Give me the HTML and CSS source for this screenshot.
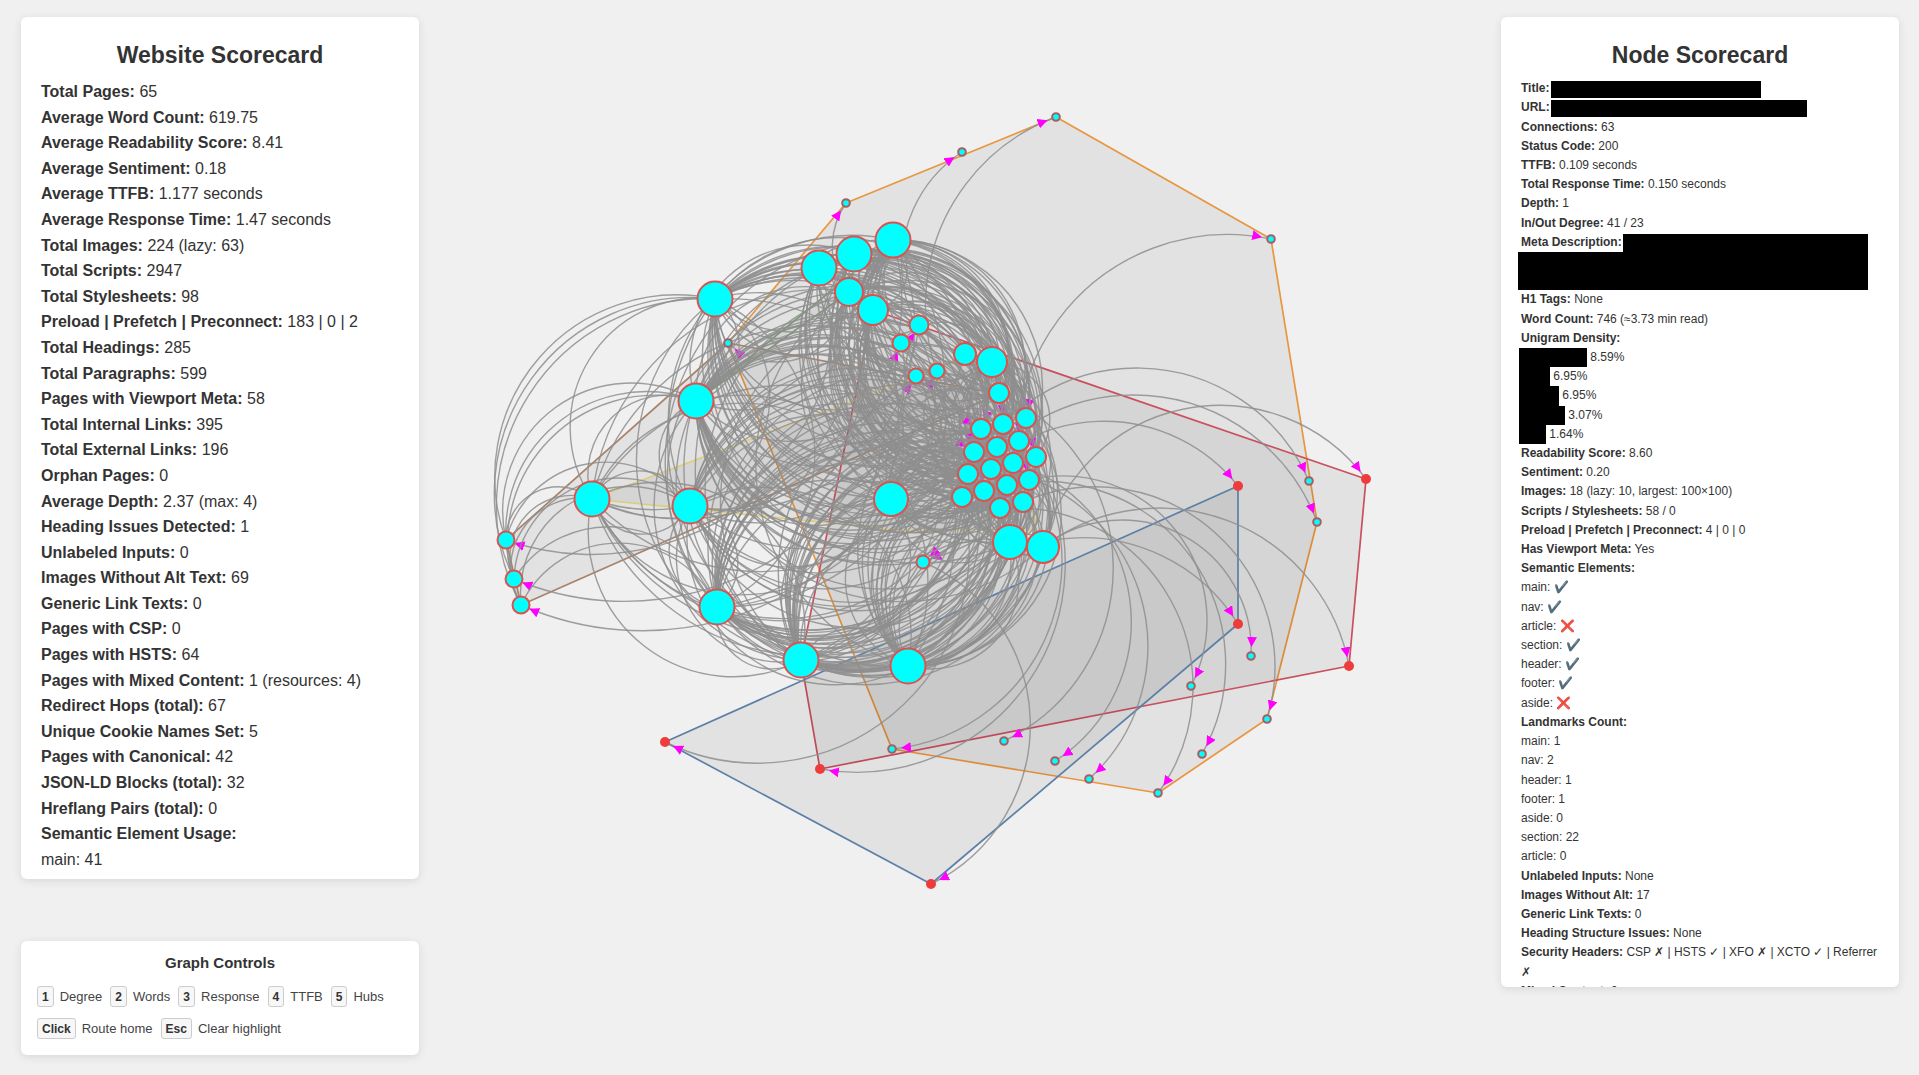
FILE: index.html
```html
<!DOCTYPE html>
<html lang="en">
<head>
<meta charset="utf-8">
<title>Website Graph</title>
<link rel="stylesheet" href="styles.css">
</head>
<body>
<svg id="graph" class="graph" viewBox="0 0 1919 1075" xmlns="http://www.w3.org/2000/svg">
  <defs>
    <marker id="arrow" viewBox="0 -5 10 10" refX="19" refY="0" markerUnits="userSpaceOnUse" markerWidth="10" markerHeight="10" orient="auto">
      <path d="M0,-5L10,0L0,5Z" class="arrowhead"/>
    </marker>
  </defs>
</svg>
<div class="layout">
  <aside class="column">
    <section class="panel site-panel">
      <h2 class="panel-title">Website Scorecard</h2>
      <div class="row"><b>Total Pages:</b> 65</div>
      <div class="row"><b>Average Word Count:</b> 619.75</div>
      <div class="row"><b>Average Readability Score:</b> 8.41</div>
      <div class="row"><b>Average Sentiment:</b> 0.18</div>
      <div class="row"><b>Average TTFB:</b> 1.177 seconds</div>
      <div class="row"><b>Average Response Time:</b> 1.47 seconds</div>
      <div class="row"><b>Total Images:</b> 224 (lazy: 63)</div>
      <div class="row"><b>Total Scripts:</b> 2947</div>
      <div class="row"><b>Total Stylesheets:</b> 98</div>
      <div class="row"><b>Preload | Prefetch | Preconnect:</b> 183 | 0 | 2</div>
      <div class="row"><b>Total Headings:</b> 285</div>
      <div class="row"><b>Total Paragraphs:</b> 599</div>
      <div class="row"><b>Pages with Viewport Meta:</b> 58</div>
      <div class="row"><b>Total Internal Links:</b> 395</div>
      <div class="row"><b>Total External Links:</b> 196</div>
      <div class="row"><b>Orphan Pages:</b> 0</div>
      <div class="row"><b>Average Depth:</b> 2.37 (max: 4)</div>
      <div class="row"><b>Heading Issues Detected:</b> 1</div>
      <div class="row"><b>Unlabeled Inputs:</b> 0</div>
      <div class="row"><b>Images Without Alt Text:</b> 69</div>
      <div class="row"><b>Generic Link Texts:</b> 0</div>
      <div class="row"><b>Pages with CSP:</b> 0</div>
      <div class="row"><b>Pages with HSTS:</b> 64</div>
      <div class="row"><b>Pages with Mixed Content:</b> 1 (resources: 4)</div>
      <div class="row"><b>Redirect Hops (total):</b> 67</div>
      <div class="row"><b>Unique Cookie Names Set:</b> 5</div>
      <div class="row"><b>Pages with Canonical:</b> 42</div>
      <div class="row"><b>JSON-LD Blocks (total):</b> 32</div>
      <div class="row"><b>Hreflang Pairs (total):</b> 0</div>
      <div class="row"><b>Semantic Element Usage:</b></div>
      <div class="row">main: 41</div>
    </section>
    <section class="panel controls-panel">
      <h3 class="controls-title">Graph Controls</h3>
      <div class="controls-row">
        <span class="control"><kbd class="key">1</kbd>Degree</span>
        <span class="control"><kbd class="key">2</kbd>Words</span>
        <span class="control"><kbd class="key">3</kbd>Response</span>
        <span class="control"><kbd class="key">4</kbd>TTFB</span>
        <span class="control"><kbd class="key">5</kbd>Hubs</span>
      </div>
      <div class="controls-row">
        <span class="control"><kbd class="key">Click</kbd>Route home</span>
        <span class="control"><kbd class="key">Esc</kbd>Clear highlight</span>
      </div>
    </section>
  </aside>
  <aside class="column">
    <section class="panel node-panel">
      <h2 class="panel-title">Node Scorecard</h2>
      <div class="row"><b>Title:</b> <span class="redact redact-line redact-title"></span></div>
      <div class="row"><b>URL:</b> <span class="redact redact-line redact-url"></span></div>
      <div class="row"><b>Connections:</b> 63</div>
      <div class="row"><b>Status Code:</b> 200</div>
      <div class="row"><b>TTFB:</b> 0.109 seconds</div>
      <div class="row"><b>Total Response Time:</b> 0.150 seconds</div>
      <div class="row"><b>Depth:</b> 1</div>
      <div class="row"><b>In/Out Degree:</b> 41 / 23</div>
      <div class="row"><b>Meta Description:</b> <span class="redact redact-line redact-meta"></span></div>
      <div class="redact redact-meta-block"></div>
      <div class="row"><b>H1 Tags:</b> None</div>
      <div class="row"><b>Word Count:</b> 746 (≈3.73 min read)</div>
      <div class="row"><b>Unigram Density:</b></div>
      <div class="row bar-row"><span class="redact bar bar-a"></span> 8.59%</div>
      <div class="row bar-row"><span class="redact bar bar-b"></span> 6.95%</div>
      <div class="row bar-row"><span class="redact bar bar-c"></span> 6.95%</div>
      <div class="row bar-row"><span class="redact bar bar-d"></span> 3.07%</div>
      <div class="row bar-row"><span class="redact bar bar-e"></span> 1.64%</div>
      <div class="row"><b>Readability Score:</b> 8.60</div>
      <div class="row"><b>Sentiment:</b> 0.20</div>
      <div class="row"><b>Images:</b> 18 (lazy: 10, largest: 100×100)</div>
      <div class="row"><b>Scripts / Stylesheets:</b> 58 / 0</div>
      <div class="row"><b>Preload | Prefetch | Preconnect:</b> 4 | 0 | 0</div>
      <div class="row"><b>Has Viewport Meta:</b> Yes</div>
      <div class="row"><b>Semantic Elements:</b></div>
      <div class="row">main: ✔️</div>
      <div class="row">nav: ✔️</div>
      <div class="row">article: ❌</div>
      <div class="row">section: ✔️</div>
      <div class="row">header: ✔️</div>
      <div class="row">footer: ✔️</div>
      <div class="row">aside: ❌</div>
      <div class="row"><b>Landmarks Count:</b></div>
      <div class="row">main: 1</div>
      <div class="row">nav: 2</div>
      <div class="row">header: 1</div>
      <div class="row">footer: 1</div>
      <div class="row">aside: 0</div>
      <div class="row">section: 22</div>
      <div class="row">article: 0</div>
      <div class="row"><b>Unlabeled Inputs:</b> None</div>
      <div class="row"><b>Images Without Alt:</b> 17</div>
      <div class="row"><b>Generic Link Texts:</b> 0</div>
      <div class="row"><b>Heading Structure Issues:</b> None</div>
      <div class="row"><b>Security Headers:</b> CSP ✗ | HSTS ✓ | XFO ✗ | XCTO ✓ | Referrer ✗</div>
      <div class="row"><b>Mixed Content:</b> 0</div>
    </section>
  </aside>
</div>
<script src="graph.js"></script>
</body>
</html>
```
FILE: styles.css
```css
* { box-sizing: border-box; }
html, body { height: 100%; margin: 0; overflow: hidden; }
body {
  position: relative;
  background: #f0f0f0;
  color: #333;
  font-family: "Liberation Sans", Arial, sans-serif;
}
.graph { position: absolute; inset: 0; width: 100%; height: 100%; }
.layout {
  position: relative;
  display: flex;
  justify-content: space-between;
  height: 100%;
  padding: 17px 20px 20px 21px;
  pointer-events: none;
}
.column { display: flex; flex-direction: column; width: 398px; }
.panel {
  background: #fff;
  border-radius: 6px;
  box-shadow: 0 2px 10px rgba(0, 0, 0, 0.1);
  overflow: hidden;
}
.site-panel { height: 862px; padding: 20px 20px 0; font-size: 16px; line-height: 25.6px; }
.site-panel .panel-title { margin-bottom: 4.6px; }
.node-panel { height: 970px; padding: 20px 20px 0; font-size: 12px; line-height: 19.2px; }
.panel-title { margin: 0 0 4.8px; font-size: 23px; line-height: 37.4px; text-align: center; color: #333; }
.row b { font-weight: 700; }
.redact { background: #000; }
.redact-line { display: inline-block; height: 17px; margin: 2px 0 0 -2px; vertical-align: top; }
.redact-title { width: 210px; }
.redact-url { width: 256px; }
.redact-meta { width: 245px; height: 18px; margin-top: 1px; }
.redact-meta-block { width: 350px; height: 38.4px; margin-left: -3px; }
.bar { display: inline-block; height: 19.2px; vertical-align: top; margin-left: -2px; }
.bar-a { width: 68px; }
.bar-b { width: 31px; }
.bar-c { width: 40px; }
.bar-d { width: 46px; }
.bar-e { width: 27px; }
.controls-panel { margin-top: auto; height: 114px; padding: 13px 16px 0; }
.controls-title { margin: 0 0 15px; font-size: 15px; line-height: 17px; text-align: center; color: #333; }
.controls-row { display: flex; gap: 8px; height: 21px; margin-bottom: 11px; }
.control { display: flex; align-items: center; font-size: 13px; line-height: 22px; color: #444; white-space: nowrap; }
.key {
  display: flex;
  align-items: center;
  height: 21px;
  margin-right: 6px;
  padding: 0 4px;
  border: 1px solid #ccc;
  border-radius: 3px;
  background: #f7f7f7;
  font: 700 12px "Liberation Sans", Arial, sans-serif;
  color: #333;
}
.hull { stroke-width: 1.7; fill: rgba(0, 0, 0, 0.055); stroke-linejoin: round; }
.hull-orange { stroke: #e8963f; }
.hull-red { stroke: #c9505e; }
.hull-blue { stroke: #5b7fa6; }
.hull-brown { stroke: #a8836a; }
.hull-yellow { stroke: #ddcd7a; }
.hull-green { stroke: #7a9a72; }
.edge { fill: none; stroke: #8e8e8e; stroke-opacity: 0.85; stroke-width: 1.4; }
.edge-arrow { marker-end: url(#arrow); }
.arrowhead { fill: #f0f; }
.node-big { fill: #0ff; stroke: #d9534f; stroke-width: 2; }
.node-small { fill: #0ff; stroke: #a85d60; stroke-width: 2; }
.node-red { fill: #ee3b3b; }
```
FILE: graph.js
```js
(function () {
  var NS = 'http://www.w3.org/2000/svg';
  var svg = document.getElementById('graph');
  var RATIO = 0.55;

  var hubs = [[715,299,17.5],[819,268,17.5],[854,254,17.5],[893,240,17.5],[849,292,14],[873,310,15],
    [696,401,17.5],[592,499,17.5],[690,506,17.5],[891,499,17],[717,607,17.5],[801,660,17.5],
    [908,666,17.5],[1010,542,17],[1043,547,16],[992,362,15]];
  var leftHubs = { 0: 1, 1: 1, 2: 1, 6: 1, 8: 1, 10: 1 };
  var heavyHubs = { 0: 1, 3: 1, 6: 1, 10: 1, 11: 1 };
  var cluster = [[1026,418],[1003,424],[981,429],[1019,441],[997,447],[974,452],[1036,457],[1013,463],
    [991,469],[968,474],[1029,480],[1007,485],[984,491],[962,497],[1023,502],[1000,508],[999,393]];
  var mid = [[965,354,11],[919,325,9.5],[901,343,8.5],[916,376,7.5],[937,371,7.5],[923,562,6.5],
    [506,540,8.5],[514,579,8.5],[521,605,8.5]];
  var small = [[728,343],[846,203],[962,152],[1056,117],[1271,239],[1309,481],[1317,522],[1251,656],
    [1191,686],[1267,719],[1202,754],[1158,793],[1089,779],[1055,761],[1004,741],[892,749]];
  var reds = [[665,742],[820,769],[931,884],[1238,486],[1238,624],[1366,479],[1349,666]];

  var hulls = [
    ['orange', [[846,203],[728,343],[892,749],[1158,793],[1267,719],[1317,522],[1271,239],[1056,117]]],
    ['red', [[873,310],[1366,479],[1349,666],[820,769],[801,660]]],
    ['blue', [[665,742],[1238,486],[1238,624],[931,884]]],
    ['brown', [[506,540],[728,343],[999,394],[521,605]]],
    ['yellow', [[592,499],[966,358],[992,363],[1036,520],[1035,530],[900,530]]],
    ['green', [[696,401],[853,273],[849,292]]]
  ];

  // Incoming links of the small inner nodes, drawn first so the hairball covers them.
  var under = [
    [1013,463,919,325],[997,447,901,343],[1000,508,916,376],[1023,502,937,371],[981,429,937,371],
    [849,292,728,343],[937,371,923,562],[849,292,923,562]
  ];
  // Links that can be told apart around the outside of the hairball; a fifth value is a set radius.
  var outer = [
    [1029,480,1056,117],[999,393,962,152],[919,325,846,203],[1043,547,1271,239],[968,474,1309,481],
    [1043,547,1366,479],[962,497,1238,486,171],[962,497,1317,522],[1043,547,1251,656],[908,666,1238,624],
    [1029,480,1191,686],[1023,502,1267,719],[1007,485,1202,754],[1000,508,1158,793],[991,469,1089,779],
    [1013,463,1055,761],[999,393,1004,741],[1003,424,892,749],[1036,457,820,769],[962,497,665,742],
    [923,562,931,884],[1043,547,1349,666,193],
    [792,460,506,540,260],[850,490,514,579,284],[891,499,521,605,300]
  ];
  // The same, ending on a hub: the hub's disc would only leave a sliver of the arrowhead showing.
  var intoHubs = [
    [801,660,592,499],
    [506,540,715,299,182],[514,579,715,299,196],[521,605,715,299,208],
    [506,540,696,401,128],[514,579,696,401],[521,605,696,401],
    [506,540,592,499],[514,579,592,499],[521,605,592,499],[506,540,690,506],[514,579,690,506],[521,605,690,506],
    [592,499,715,299],[592,499,696,401],
    [592,499,690,506],[521,605,717,607],[514,579,717,607]
  ];

  var seed = 12345;
  function rand() { seed = (seed * 16807) % 2147483647; return seed / 2147483647; }

  function el(name, attrs, parent) {
    var n = document.createElementNS(NS, name);
    for (var k in attrs) n.setAttribute(k, attrs[k]);
    parent.appendChild(n);
    return n;
  }
  function edge(g, a, b, arrow, radius) {
    var d = Math.hypot(b[0] - a[0], b[1] - a[1]);
    var r = (radius || d * RATIO).toFixed(1);
    el('path', {
      'class': arrow ? 'edge edge-arrow' : 'edge',
      d: 'M' + a[0] + ',' + a[1] + 'A' + r + ',' + r + ' 0 0,1 ' + b[0] + ',' + b[1]
    }, g);
  }
  // Keep a generated arc only if its furthest point stays inside the hairball's outline.
  function fits(a, b) {
    var dx = b[0] - a[0], dy = b[1] - a[1], d = Math.hypot(dx, dy), r = d * RATIO;
    var s = r - Math.sqrt(r * r - d * d / 4);
    var px = (a[0] + b[0]) / 2 + dy / d * s, py = (a[1] + b[1]) / 2 - dx / d * s;
    return px >= 625 && px <= 1050 && Math.hypot(px - 850, py - 465) <= 228;
  }
  function tryEdge(g, a, b, arrow) { if (fits(a, b)) edge(g, a, b, arrow); }

  var hullLayer = el('g', {}, svg);
  hulls.forEach(function (h) {
    el('polygon', { 'class': 'hull hull-' + h[0], points: h[1].map(function (p) { return p.join(','); }).join(' ') }, hullLayer);
  });

  var edges = el('g', {}, svg);
  under.forEach(function (e) { edge(edges, [e[0], e[1]], [e[2], e[3]], true); });
  outer.forEach(function (e) { edge(edges, [e[0], e[1]], [e[2], e[3]], true, e[4]); });
  intoHubs.forEach(function (e) { edge(edges, [e[0], e[1]], [e[2], e[3]], false, e[4]); });
  hubs.forEach(function (h, i) {
    var weight = i === 7 ? 0.12 : (heavyHubs[i] ? 0.8 : 0.5);
    cluster.forEach(function (c) {
      var shown = rand() < weight, back = rand() < weight, head = rand() < 0.3;
      if (shown) tryEdge(edges, h, c, leftHubs[i] && head);
      if (back) tryEdge(edges, c, h, false);
    });
    mid.slice(0, 5).forEach(function (c) {
      if (rand() < 0.3) tryEdge(edges, c, h, false);
    });
    hubs.forEach(function (o, j) {
      if (i !== j && rand() < 0.5) tryEdge(edges, h, o, false);
    });
  });

  var nodes = el('g', {}, svg);
  hubs.concat(mid).forEach(function (n) { el('circle', { 'class': 'node-big', cx: n[0], cy: n[1], r: n[2] }, nodes); });
  cluster.forEach(function (n) { el('circle', { 'class': 'node-big', cx: n[0], cy: n[1], r: 10 }, nodes); });
  small.forEach(function (n) { el('circle', { 'class': 'node-small', cx: n[0], cy: n[1], r: 3.8 }, nodes); });
  reds.forEach(function (n) { el('circle', { 'class': 'node-red', cx: n[0], cy: n[1], r: 5 }, nodes); });
})();
```
